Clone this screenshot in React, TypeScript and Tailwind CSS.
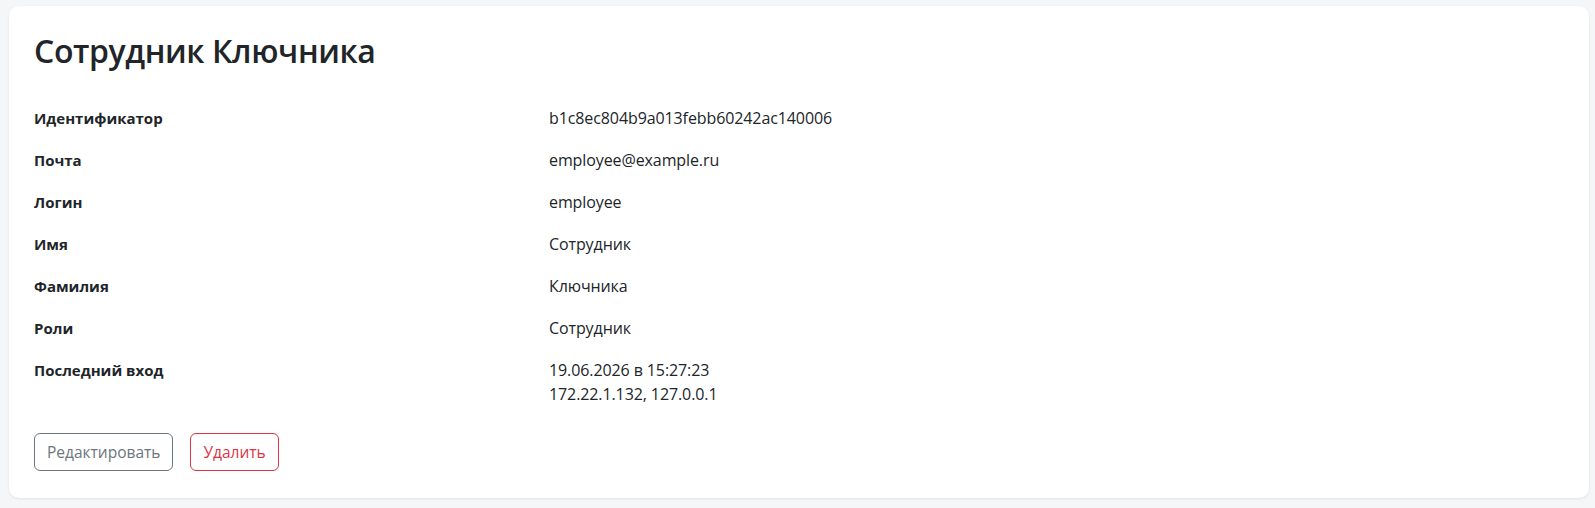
const rows: { label: string; value: string[] }[] = [
    { label: "Идентификатор", value: ["b1c8ec804b9a013febb60242ac140006"] },
    { label: "Почта", value: ["employee@example.ru"] },
    { label: "Логин", value: ["employee"] },
    { label: "Имя", value: ["Сотрудник"] },
    { label: "Фамилия", value: ["Ключника"] },
    { label: "Роли", value: ["Сотрудник"] },
    { label: "Последний вход", value: ["19.06.2026 в 15:27:23", "172.22.1.132, 127.0.0.1"] },
];

const App = () => {
    return (
        <div
            className="min-h-screen bg-[#f5f6f8] pt-[6px] pl-[9px] pr-[6px] text-[#212529]"
            style={{ fontFamily: '"Open Sans", "Noto Sans", sans-serif' }}
        >
            <div className="bg-white rounded-[10px] shadow-[0_1px_3px_rgba(0,0,0,0.08)] px-[25px] pt-[26px] pb-[27px]">
                <h2 className="text-[32px] leading-[1.2] font-semibold mb-[27px] tracking-[-0.4px]">Сотрудник Ключника</h2>

                <div className="flex flex-col">
                    {rows.map((row) => (
                        <div key={row.label} className="flex py-[9px] leading-6">
                            <div className="w-[515px] font-bold text-[15px]">{row.label}</div>
                            <div className="text-[16px] tracking-[-0.1px]">
                                {row.value.map((v) => (
                                    <div key={v}>{v}</div>
                                ))}
                            </div>
                        </div>
                    ))}
                </div>

                <div className="flex gap-[17px] mt-[18px]">
                    <button className="border border-[#6c757d] text-[#6c757d] rounded-[6px] px-3 h-[38px] text-[15.5px]">
                        Редактировать
                    </button>
                    <button className="border border-[#dc3545] text-[#dc3545] rounded-[6px] px-3 h-[38px] text-[15.5px]">
                        Удалить
                    </button>
                </div>
            </div>
        </div>
    );
};

export default App;
